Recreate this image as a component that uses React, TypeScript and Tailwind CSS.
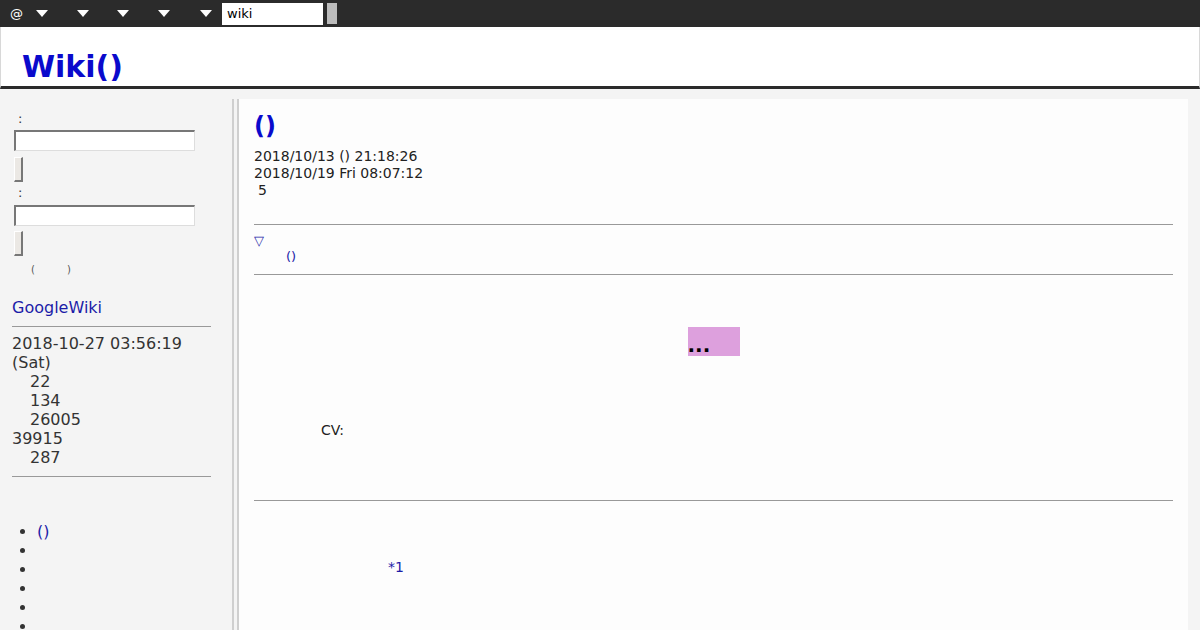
import React from "react";

function Caret() {
  return (
    <svg width="12" height="7" viewBox="0 0 12 7" className="block">
      <polygon points="0,0 12,0 6,7" fill="#ffffff" />
    </svg>
  );
}

function SideInput() {
  return (
    <input
      type="text"
      className="block ml-[2px] w-[181px] h-[21px] bg-white border-t-2 border-l-2 border-b border-r border-t-[#777] border-l-[#777] border-b-[#ddd] border-r-[#ddd] outline-none"
    />
  );
}

function SideButton() {
  return (
    <button
      type="button"
      className="block ml-[2px] w-[9px] h-[25px] bg-[#ebe8e4] border-r-2 border-b-2 border-r-[#777] border-b-[#777] border-l border-t border-l-[#fff] border-t-[#fff]"
    />
  );
}

export default function App() {
  const stats = [
    { text: "2018-10-27 03:56:19", indent: false },
    { text: "(Sat)", indent: false },
    { text: "22", indent: true },
    { text: "134", indent: true },
    { text: "26005", indent: true },
    { text: "39915", indent: false },
    { text: "287", indent: true },
  ];

  return (
    <div className="min-h-[630px] bg-[#f4f4f4] font-['DejaVu_Sans',sans-serif] overflow-hidden">
      {/* top toolbar */}
      <div className="h-[27px] bg-[#2b2b2b] flex items-center text-white text-[13px]">
        <span className="ml-[10px] leading-none">@</span>
        <span className="ml-[13px]"><Caret /></span>
        <span className="ml-[29px]"><Caret /></span>
        <span className="ml-[28px]"><Caret /></span>
        <span className="ml-[29px]"><Caret /></span>
        <span className="ml-[30px]"><Caret /></span>
        <div className="ml-[10px] w-[101px] h-[22px] bg-white text-black text-[13px] leading-[22px] pl-[5px]">wiki</div>
        <div className="ml-[4px] w-[10px] h-[21px] bg-[#bcbcbc]" />
      </div>

      {/* header */}
      <div className="h-[62px] bg-white border-l border-r border-[#d8d8d8] border-b-[3px] border-b-[#2a2a2a]">
        <h1 className="pl-[21px] pt-[22px] text-[30px] leading-[35px] font-bold text-[#0a0acc]">Wiki()</h1>
      </div>

      <div className="flex pt-[10px]">
        {/* sidebar */}
        <div className="w-[232px] shrink-0 pl-[12px] text-[#333]">
          <div className="mt-[12px] pl-[6px] text-[13px] leading-[15px]">:</div>
          <div className="mt-[4px]"><SideInput /></div>
          <div className="mt-[6px]"><SideButton /></div>
          <div className="mt-[3px] pl-[6px] text-[13px] leading-[15px]">:</div>
          <div className="mt-[5px]"><SideInput /></div>
          <div className="mt-[5px]"><SideButton /></div>
          <div className="mt-[8px] flex text-[10px] leading-[12px] text-[#555]">
            <span className="ml-[19px]">(</span>
            <span className="ml-[32px]">)</span>
          </div>
          <a className="block mt-[22px] text-[16px] leading-[19px] text-[#1c1ca8]">GoogleWiki</a>
          <div className="mt-[9px] w-[199px] h-px bg-[#999]" />
          <div className="mt-[7px] text-[16px] leading-[19px]">
            {stats.map((s, i) => (
              <div key={i} className={s.indent ? "pl-[18px]" : ""}>{s.text}</div>
            ))}
          </div>
          <div className="mt-[9px] w-[199px] h-px bg-[#999]" />
          <ul className="mt-[45px] pl-[25px] list-disc text-[16px] leading-[19px] marker:text-[#333]">
            <li className="text-[#1c1ca8]">()</li>
            <li>&nbsp;</li>
            <li>&nbsp;</li>
            <li>&nbsp;</li>
            <li>&nbsp;</li>
            <li>&nbsp;</li>
          </ul>
        </div>

        {/* content */}
        <div className="flex-1 border-l-[7px] border-double border-[#cfcfcf]">
          <div className="mr-[12px] bg-[#fdfdfd] min-h-[540px] px-[15px] text-[#222]">
            <h2 className="pt-[13px] text-[24px] leading-[28px] font-bold text-[#0a0acc]">()</h2>
            <div className="mt-[8px] text-[14px] leading-[17px]">
              <div>2018/10/13 () 21:18:26</div>
              <div>2018/10/19 Fri 08:07:12</div>
              <div className="pl-[4px]">5</div>
            </div>
            <div className="mt-[25px] h-px bg-[#999]" />
            <div className="mt-[8px] text-[13px] leading-[16px] text-[#1c1ca8]">▽</div>
            <div className="pl-[32px] text-[13px] leading-[16px] text-[#1c1ca8]">()</div>
            <div className="mt-[9px] h-px bg-[#999]" />
            <div className="mt-[52px] text-center">
              <span className="inline-block align-top w-[52px] h-[29px] bg-[#dda0dd] text-left text-[20px] leading-[36px] font-bold text-black">...</span>
            </div>
            <div className="mt-[66px] pl-[67px] text-[14px] leading-[17px]">CV:</div>
            <div className="mt-[61px] h-px bg-[#999]" />
            <div className="mt-[58px] pl-[134px] text-[14px] leading-[17px] text-[#1c1ca8]">*1</div>
          </div>
        </div>
      </div>
    </div>
  );
}
